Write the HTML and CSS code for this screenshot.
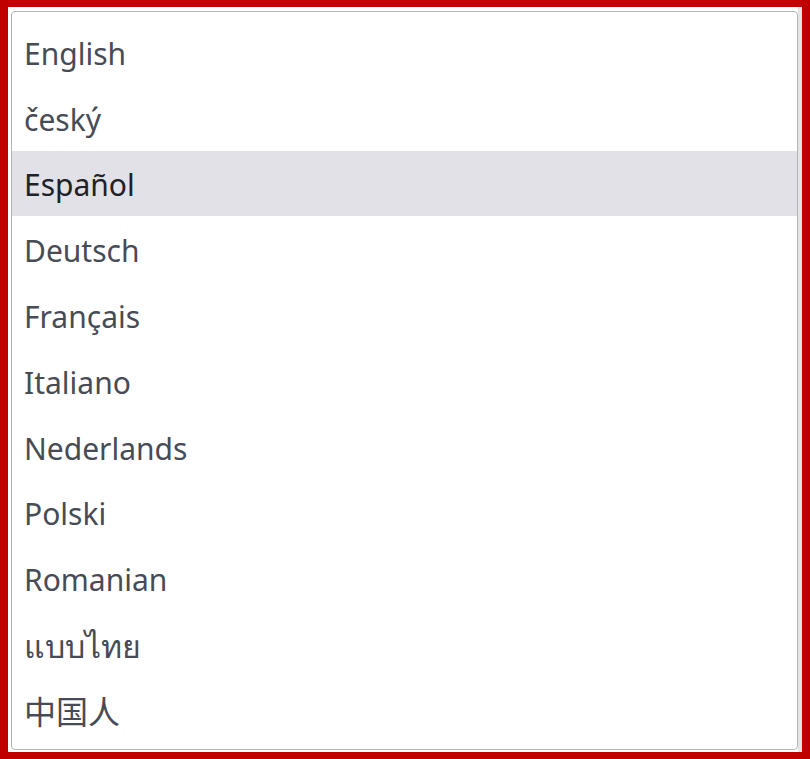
FILE: index.html
```html
<!DOCTYPE html>
<html lang="en">
<head>
  <meta charset="UTF-8">
  <meta name="viewport" content="width=device-width, initial-scale=1.0">
  <title>Language</title>
  <link rel="stylesheet" href="styles.css">
</head>
<body>
  <div class="frame">
    <div class="content">
      <ul class="menu">
        <li class="item">English</li>
        <li class="item">český</li>
        <li class="item active">Español</li>
        <li class="item">Deutsch</li>
        <li class="item">Français</li>
        <li class="item">Italiano</li>
        <li class="item">Nederlands</li>
        <li class="item">Polski</li>
        <li class="item">Romanian</li>
        <li class="item wide" lang="th">แบบไทย</li>
        <li class="item wide" lang="zh">中国人</li>
      </ul>
    </div>
    <div class="edge"></div>
  </div>
</body>
</html>
```

FILE: styles.css
```css
html, body {
  margin: 0;
  padding: 0;
  background: #ffffff;
}
.frame {
  box-sizing: border-box;
  width: 810px;
  height: 759px;
  border-style: solid;
  border-color: #c00000;
  border-width: 7px 8px 7px 8px;
  display: flex;
}
.content {
  flex: 1;
  padding: 4px 0 2px 3px;
  display: flex;
}
.edge {
  width: 4px;
  background: #e4e4e4;
}
.menu {
  flex: 1;
  list-style: none;
  margin: 0;
  padding: 7px 0 6px;
  border: 1px solid #b4b4b4;
  border-radius: 4px;
  background: #fff;
  font-family: "Noto Sans", "Noto Sans CJK SC", sans-serif;
  font-size: 30px;
  color: #474b55;
}
.item {
  box-sizing: border-box;
  height: 65.8px;
  line-height: 62px;
  padding: 3.8px 12px 0;
  white-space: nowrap;
}
.item.wide {
  font-size: 32px;
}
.item.active {
  background: #e1e1e7;
  color: #1e2128;
}
```
